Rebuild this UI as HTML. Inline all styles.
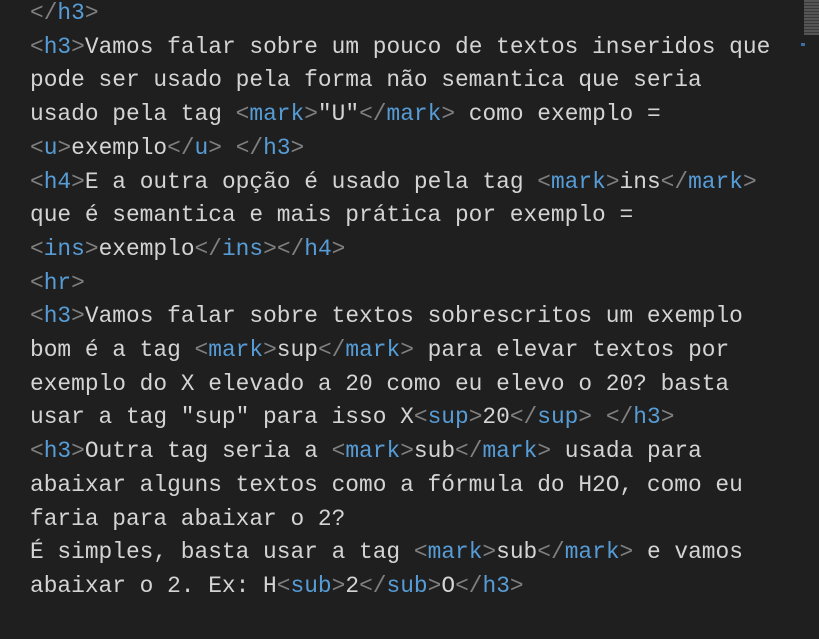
<!DOCTYPE html>
<html><head><meta charset="utf-8"><style>
html,body{margin:0;padding:0;background:#1f1f1f;width:819px;height:639px;overflow:hidden}
pre{position:absolute;left:30px;top:-3px;margin:0;font-family:"Liberation Mono","DejaVu Sans Mono",monospace;font-size:22.85px;line-height:33.7px;color:#d4d4d4;white-space:pre}
.b{color:#808080}.t{color:#569cd6}
.mm{position:absolute;left:804px;top:0;width:15px;height:35px;background:repeating-linear-gradient(0deg,#555 0 2px,#3a3a3a 2px 3px)}
.mm2{position:absolute;left:801px;top:43px;width:4px;height:3px;background:#3b6ea5}
</style></head><body>
<pre><span class="b">&lt;/</span><span class="t">h3</span><span class="b">&gt;</span>
<span class="b">&lt;</span><span class="t">h3</span><span class="b">&gt;</span>Vamos falar sobre um pouco de textos inseridos que
pode ser usado pela forma não semantica que seria
usado pela tag <span class="b">&lt;</span><span class="t">mark</span><span class="b">&gt;</span>"U"<span class="b">&lt;/</span><span class="t">mark</span><span class="b">&gt;</span> como exemplo =
<span class="b">&lt;</span><span class="t">u</span><span class="b">&gt;</span>exemplo<span class="b">&lt;/</span><span class="t">u</span><span class="b">&gt;</span> <span class="b">&lt;/</span><span class="t">h3</span><span class="b">&gt;</span>
<span class="b">&lt;</span><span class="t">h4</span><span class="b">&gt;</span>E a outra opção é usado pela tag <span class="b">&lt;</span><span class="t">mark</span><span class="b">&gt;</span>ins<span class="b">&lt;/</span><span class="t">mark</span><span class="b">&gt;</span>
que é semantica e mais prática por exemplo =
<span class="b">&lt;</span><span class="t">ins</span><span class="b">&gt;</span>exemplo<span class="b">&lt;/</span><span class="t">ins</span><span class="b">&gt;&lt;/</span><span class="t">h4</span><span class="b">&gt;</span>
<span class="b">&lt;</span><span class="t">hr</span><span class="b">&gt;</span>
<span class="b">&lt;</span><span class="t">h3</span><span class="b">&gt;</span>Vamos falar sobre textos sobrescritos um exemplo
bom é a tag <span class="b">&lt;</span><span class="t">mark</span><span class="b">&gt;</span>sup<span class="b">&lt;/</span><span class="t">mark</span><span class="b">&gt;</span> para elevar textos por
exemplo do X elevado a 20 como eu elevo o 20? basta
usar a tag "sup" para isso X<span class="b">&lt;</span><span class="t">sup</span><span class="b">&gt;</span>20<span class="b">&lt;/</span><span class="t">sup</span><span class="b">&gt;</span> <span class="b">&lt;/</span><span class="t">h3</span><span class="b">&gt;</span>
<span class="b">&lt;</span><span class="t">h3</span><span class="b">&gt;</span>Outra tag seria a <span class="b">&lt;</span><span class="t">mark</span><span class="b">&gt;</span>sub<span class="b">&lt;/</span><span class="t">mark</span><span class="b">&gt;</span> usada para
abaixar alguns textos como a fórmula do H2O, como eu
faria para abaixar o 2?
É simples, basta usar a tag <span class="b">&lt;</span><span class="t">mark</span><span class="b">&gt;</span>sub<span class="b">&lt;/</span><span class="t">mark</span><span class="b">&gt;</span> e vamos
abaixar o 2. Ex: H<span class="b">&lt;</span><span class="t">sub</span><span class="b">&gt;</span>2<span class="b">&lt;/</span><span class="t">sub</span><span class="b">&gt;</span>O<span class="b">&lt;/</span><span class="t">h3</span><span class="b">&gt;</span></pre>
<div class="mm"></div><div class="mm2"></div>
</body></html>
